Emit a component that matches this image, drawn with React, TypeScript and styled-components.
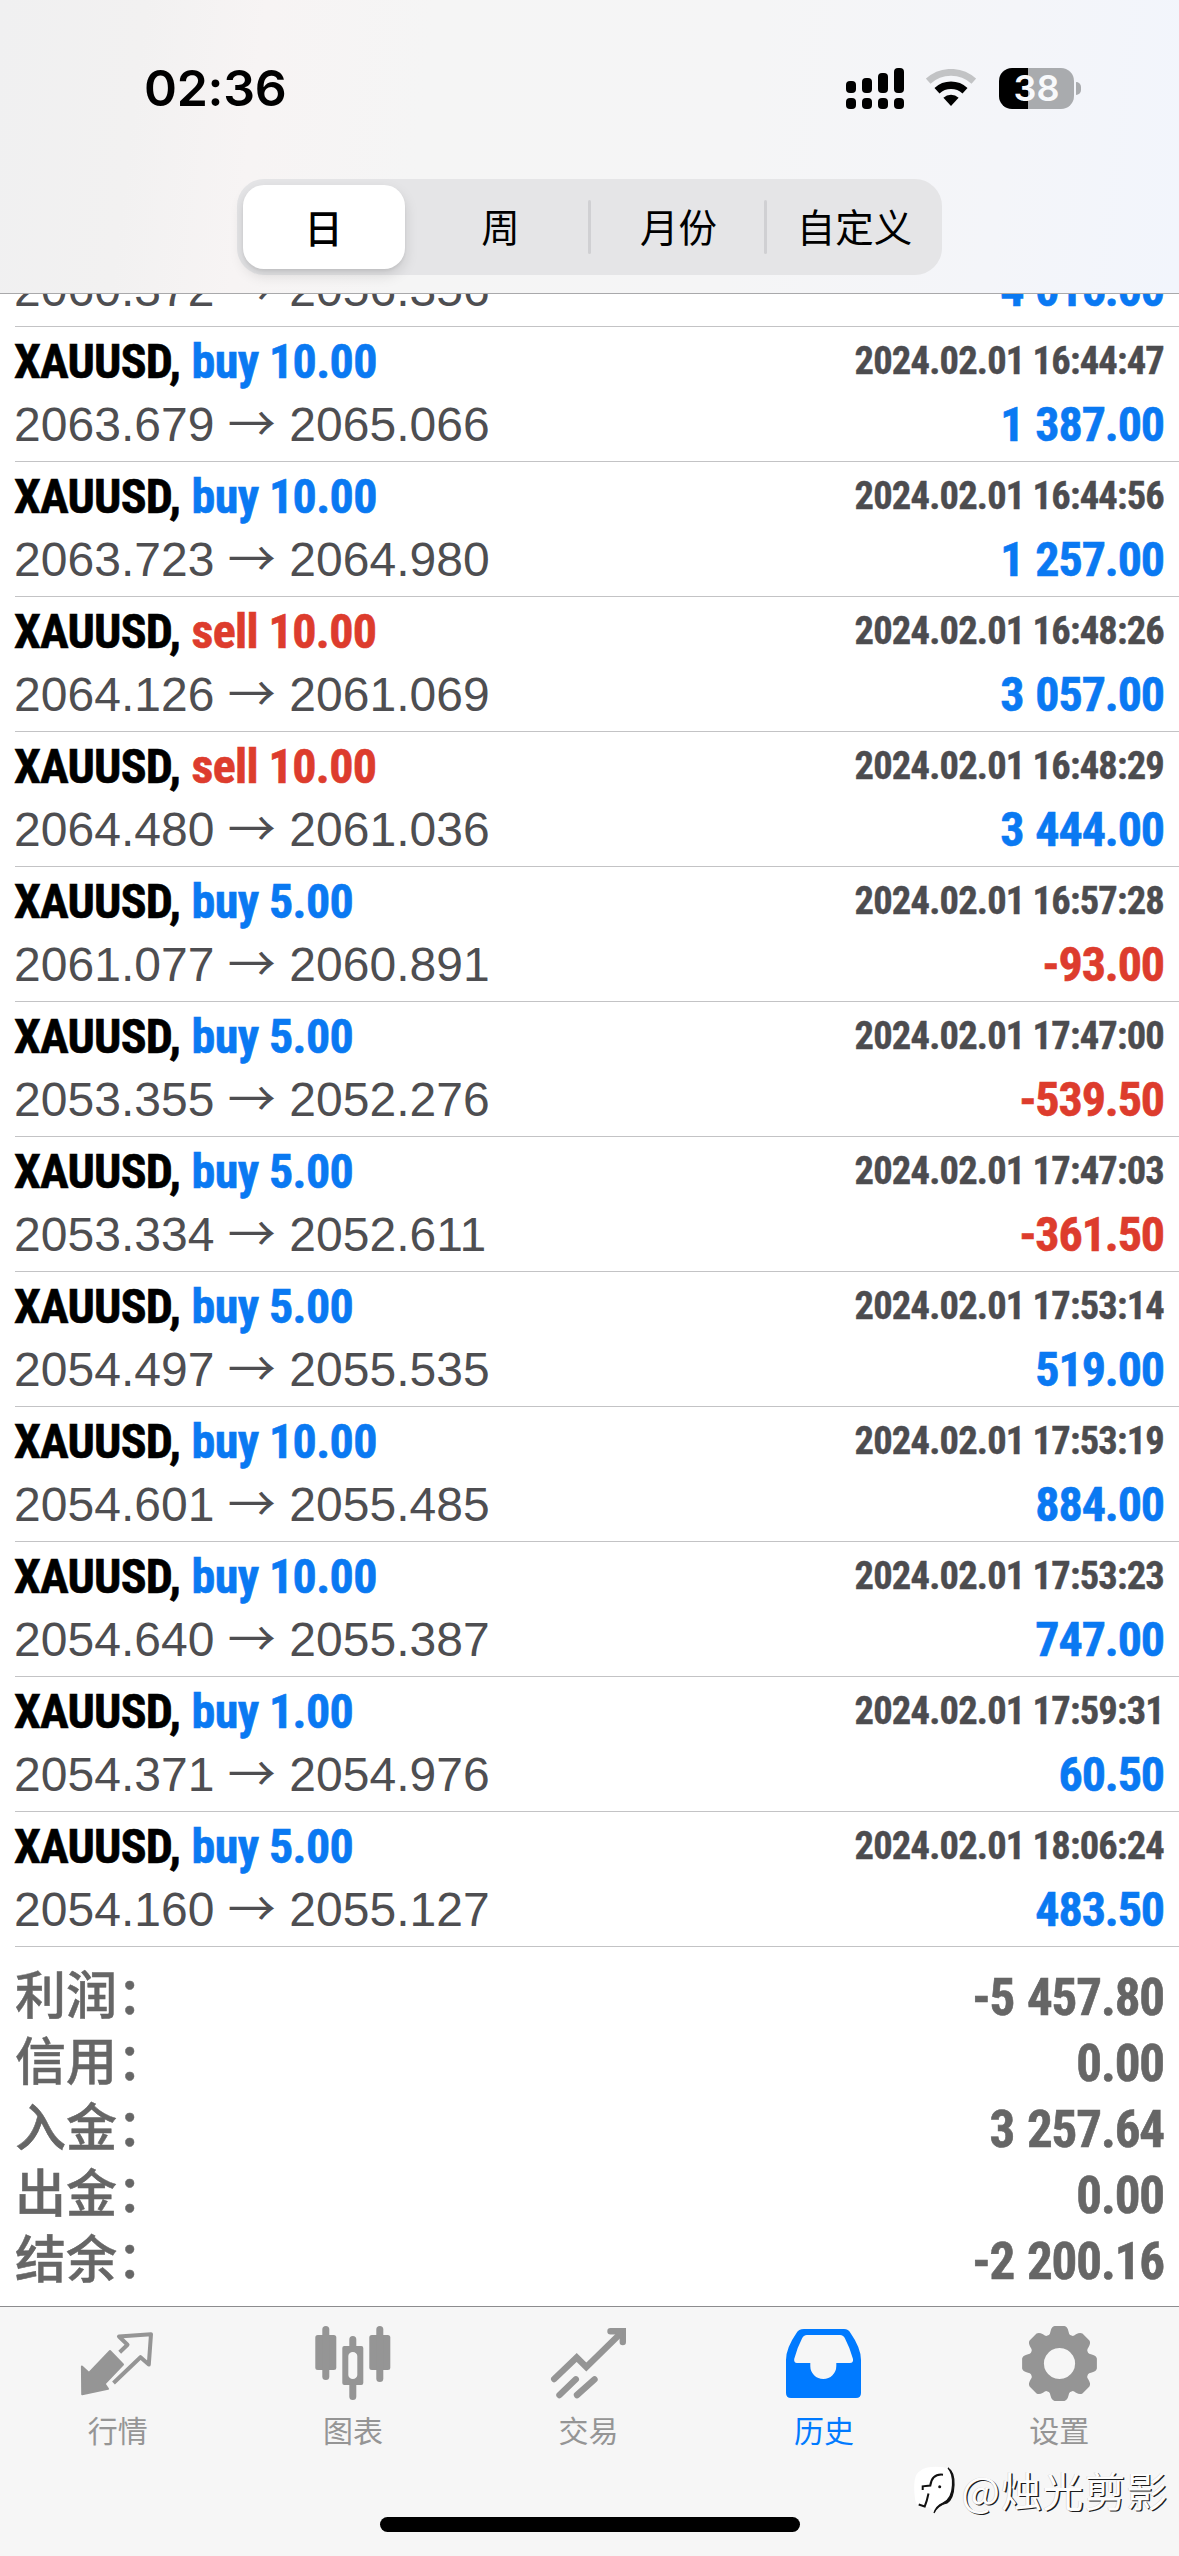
import React from "react";
import styled, { createGlobalStyle } from "styled-components";

const BLUE = "#0a79f2";
const RED = "#dd3c2d";
const CJK = '"Noto Sans CJK SC", sans-serif';
const CONDENSED = '"Roboto Condensed", Roboto, sans-serif';

const GlobalStyle = createGlobalStyle`
  * { box-sizing: border-box; }
  body { margin: 0; background: #fff; }
`;

const Screen = styled.div`
  position: relative;
  display: flex;
  flex-direction: column;
  width: 1179px;
  height: 2556px;
  overflow: hidden;
  background: #fff;
  font-family: ${CJK};
`;

const Header = styled.header`
  flex: none;
  display: flex;
  flex-direction: column;
  height: 294px;
  border-bottom: 1px solid #a9a9ab;
  background: linear-gradient(97deg, #f0f0f1 0%, #f2f1f1 12%, #f7f4f4 22%, #f5f5f5 36%, #f5f5f6 62%, #f4f5f9 84%, #f2f5fc 100%);
`;

const StatusBar = styled.div`
  flex: none;
  display: flex;
  align-items: center;
  justify-content: space-between;
  height: 179px;
  padding: 0 98px 3px 144px;
`;

const Clock = styled.div`
  font: 600 50px/60px Inter, sans-serif;
  letter-spacing: -0.3px;
  color: #000;
`;

const StatusIcons = styled.div`
  display: flex;
  align-items: center;
  gap: 22px;
`;

const Battery = styled.div`
  display: flex;
  align-items: center;
  gap: 2px;
  margin-left: 1px;
`;

const BatteryBody = styled.div`
  display: flex;
  align-items: center;
  justify-content: center;
  width: 75px;
  height: 41px;
  border-radius: 13px;
  background: linear-gradient(90deg, #000 38.7%, #a9abae 38.7%);
  color: #f8f9fb;
  font: 600 36px/41px Inter, sans-serif;
`;

const BatteryTip = styled.div`
  width: 5px;
  height: 13px;
  border-radius: 0 6px 6px 0;
  background: #a9abae;
`;

const Segments = styled.div`
  align-self: center;
  display: flex;
  width: 705px;
  height: 96px;
  margin-right: 1px;
  border-radius: 27px;
  background: #e5e5e7;
`;

const Segment = styled.button<{ $selected?: boolean; $divided?: boolean }>`
  position: relative;
  flex: none;
  width: 176px;
  display: flex;
  align-items: center;
  justify-content: center;
  border: 0;
  padding: 0 0 4px;
  color: #000;
  font: ${(p) => (p.$selected ? 500 : 400)} 38.5px/60px ${CJK};
  background: none;
  ${(p) =>
    p.$selected &&
    `width: 162px; height: 84px; margin: 6px 8px 6px 6px; padding-bottom: 3px; border-radius: 21px;
     background: #fff; box-shadow: 0 6px 14px rgba(0,0,0,.13), 0 2px 3px rgba(0,0,0,.06);`}
  ${(p) =>
    p.$divided &&
    `padding-left: 4px;
     &::before { content: ""; position: absolute; left: -1px; top: 21px; width: 3px; height: 54px; border-radius: 2px; background: #d0d0d3; }`}
`;

const History = styled.main`
  flex: 1;
  min-height: 0;
  overflow: hidden;
`;

const Deals = styled.ul`
  list-style: none;
  margin: -102px 0 0;
  padding: 0 0 0 15px;
`;

const Deal = styled.li`
  display: flex;
  flex-direction: column;
  gap: 3px;
  height: 135px;
  padding: 5px 15px 0 0;
  border-bottom: 1px solid #c3c3c5;
`;

const Line = styled.div`
  display: flex;
  justify-content: space-between;
  height: 60px;
  margin-left: -1px;
  white-space: pre;
`;

const Title = styled.span`
  font: 700 48px/60px ${CONDENSED};
  letter-spacing: -0.8px;
  color: #000;
  -webkit-text-stroke-width: 0.6px;
`;

const Side = styled.span<{ $tone: string }>`
  margin-left: 1px;
  letter-spacing: -0.6px;
  color: ${(p) => p.$tone};
`;

const Time = styled.time`
  font: 700 38.5px/57px ${CONDENSED};
  letter-spacing: -0.8px;
  color: #4c4c4f;
  -webkit-text-stroke-width: 0.4px;
`;

const Prices = styled.span`
  font: 400 48px/60px "Liberation Sans", Arial, sans-serif;
  letter-spacing: 0.03px;
  color: #4e4e51;
`;

const Arrow = styled.span`
  font: 400 48px/0 ${CJK};
`;

const Profit = styled.span<{ $tone: string }>`
  font: 700 48px/60px ${CONDENSED};
  letter-spacing: -1.1px;
  word-spacing: 2px;
  color: ${(p) => p.$tone};
  -webkit-text-stroke-width: 0.6px;
`;

const Totals = styled.dl`
  margin: 0;
  padding: 18px 15px 0;
`;

const Total = styled.div`
  display: flex;
  justify-content: space-between;
  height: 66px;
  color: #666;
`;

const TotalName = styled.dt`
  font: 500 51px/54px ${CJK};
  -webkit-text-stroke-width: 0.5px;
`;

const TotalValue = styled.dd`
  margin: 0;
  font: 700 51px/65px ${CONDENSED};
  letter-spacing: -1.1px;
  word-spacing: 2px;
  -webkit-text-stroke-width: 0.6px;
`;

const TabBar = styled.nav`
  flex: none;
  display: grid;
  grid-template-columns: repeat(5, 1fr);
  align-items: start;
  height: 211px;
  padding-right: 2px;
  border-top: 1px solid #8c8c8e;
  background: #f6f6f6;
`;

const Tab = styled.a<{ $active?: boolean }>`
  display: flex;
  flex-direction: column;
  align-items: center;
  gap: 6px;
  padding-top: 19px;
  color: ${(p) => (p.$active ? "#007aff" : "#959595")};
  font: 400 30px/44px ${CJK};
`;

const TabIcon = styled.svg`
  display: block;
  width: 75px;
  height: 75px;
  overflow: visible;
`;

const HomeArea = styled.footer`
  flex: none;
  display: flex;
  justify-content: center;
  height: 39px;
  background: #f6f6f6;
`;

const HomeIndicator = styled.div`
  width: 420px;
  height: 15px;
  border-radius: 8px;
  background: #000;
`;

const Watermark = styled.div`
  position: absolute;
  right: 11px;
  bottom: 42px;
  display: flex;
  align-items: center;
  height: 50px;
  color: #fdfdfd;
  font: 400 41px/50px ${CJK};
  letter-spacing: 0.8px;
  text-shadow: 1.4px 1.4px 0.5px #1c1c1c, -0.5px -0.5px 0.5px #ccc;
`;

const periods = ["日", "周", "月份", "自定义"];

type DealData = { side: "buy" | "sell"; volume: string; open: string; close: string; time: string; profit: string };

const deals: DealData[] = [
  ["sell", "10.00", "2060.372", "2056.356", "16:38:12", "4 016.00"],
  ["buy", "10.00", "2063.679", "2065.066", "16:44:47", "1 387.00"],
  ["buy", "10.00", "2063.723", "2064.980", "16:44:56", "1 257.00"],
  ["sell", "10.00", "2064.126", "2061.069", "16:48:26", "3 057.00"],
  ["sell", "10.00", "2064.480", "2061.036", "16:48:29", "3 444.00"],
  ["buy", "5.00", "2061.077", "2060.891", "16:57:28", "-93.00"],
  ["buy", "5.00", "2053.355", "2052.276", "17:47:00", "-539.50"],
  ["buy", "5.00", "2053.334", "2052.611", "17:47:03", "-361.50"],
  ["buy", "5.00", "2054.497", "2055.535", "17:53:14", "519.00"],
  ["buy", "10.00", "2054.601", "2055.485", "17:53:19", "884.00"],
  ["buy", "10.00", "2054.640", "2055.387", "17:53:23", "747.00"],
  ["buy", "1.00", "2054.371", "2054.976", "17:59:31", "60.50"],
  ["buy", "5.00", "2054.160", "2055.127", "18:06:24", "483.50"],
].map(([side, volume, open, close, time, profit]) => ({ side, volume, open, close, time, profit }) as DealData);

const totals = [
  ["利润：", "-5 457.80"],
  ["信用：", "0.00"],
  ["入金：", "3 257.64"],
  ["出金：", "0.00"],
  ["结余：", "-2 200.16"],
];

const SignalIcon = () => (
  <svg width="58" height="41" viewBox="0 0 58 41">
    {[13, 10, 5, 0].map((top, i) => (
      <g key={i}>
        <rect x={i * 16} y={top} width="10" height={25 - top} rx="4" />
        <rect x={i * 16} y="30" width="10" height="11" rx="4" />
      </g>
    ))}
  </svg>
);

const WifiIcon = () => (
  <svg width="50" height="38" viewBox="0 0 50 38" fill="none">
    <path d="M2.2 12.2A33.7 33.7 0 0 1 47.8 12.2" stroke="#c2c3c5" strokeWidth="6.8" />
    <path d="M11 21.7A20.7 20.7 0 0 1 39 21.7" stroke="#000" strokeWidth="7.4" />
    <path d="M25 37L17.4 28.7A11.3 11.3 0 0 1 32.6 28.7Z" fill="#000" />
  </svg>
);

const QuotesIcon = () => (
  <TabIcon viewBox="0 0 75 75">
    <path
      d="M1.9 40.5L9 47L30 25L43 38.5L24.6 57.8L28 62.8L2.2 68.2Z"
      fill="currentColor"
      stroke="currentColor"
      strokeWidth="2"
      strokeLinejoin="round"
    />
    <path
      d="M39.7 26.3L47.5 18.7L39 10.5L71 8.2L68.8 38.5L60.5 31.2L33.5 57"
      fill="none"
      stroke="currentColor"
      strokeWidth="4"
      strokeLinejoin="round"
    />
  </TabIcon>
);

const ChartIcon = () => (
  <TabIcon viewBox="0.7 0 75 75" fill="currentColor">
    <rect x="0" y="9" width="21" height="35" rx="2.5" />
    <rect x="7" y="0" width="7" height="54" rx="3.5" />
    <path fillRule="evenodd" d="M29 20h17a2 2 0 0 1 2 2v35a2 2 0 0 1-2 2h-17a2 2 0 0 1-2-2v-35a2 2 0 0 1 2-2zM37.500 26a4.500 4 0 0 0-4.500 4v19a4.500 4 0 0 0 9 0v-19a4.500 4 0 0 0-4.500-4z" />
    <path d="M34 21v-7.500a3.500 3.500 0 0 1 7 0v7.500zM34 58v12.500a3.500 3.500 0 0 0 7 0v-12.500z" />
    <rect x="54" y="9" width="21" height="35" rx="2.5" />
    <rect x="61" y="0" width="7" height="56" rx="3.5" />
  </TabIcon>
);

const TradeIcon = () => (
  <TabIcon viewBox="0 0 75 75" fill="none" stroke="currentColor" strokeWidth="6.4" strokeLinecap="round">
    <path d="M3.200 53L25.700 31.500L35.300 41L69 8" />
    <path d="M59.500 5.200H71.800V16" />
    <path d="M63 5.200H71.800V14Z" fill="currentColor" strokeWidth="1" />
    <path d="M8.500 69L24.800 53.300M26 69L43.500 53.300" />
  </TabIcon>
);

const HistoryIcon = () => (
  <TabIcon viewBox="0 0 75 75" fill="currentColor">
    <path
      fillRule="evenodd"
      d="M18 3H58Q62.500 3 64.500 7Q75 22 75 34V67Q75 72 70 72H5Q0 72 0 67V34Q0 22 10.500 7Q12.500 3 18 3ZM21 9Q17.500 9 16 12.500Q11 22 8.200 33Q7.800 37 11 37H24.300V40A13 13 0 0 0 50.300 40V37H64Q67.500 37 67 33Q64 22 59 12.500Q57.500 9 54 9Z"
    />
  </TabIcon>
);

const polar = (radius: number, degrees: number) => {
  const a = (degrees * Math.PI) / 180;
  return `${(37.5 + radius * Math.sin(a)).toFixed(2)} ${(37.5 - radius * Math.cos(a)).toFixed(2)}`;
};

const gearOutline =
  Array.from({ length: 8 }, (_, i) => {
    const t = i * 45;
    return [
      `${i === 0 ? "M" : "L"}${polar(30.5, t - 20.5)}`,
      `Q${polar(30.5, t - 18)} ${polar(33.5, t - 15.5)}`,
      `Q${polar(37.6, t - 12)} ${polar(37.7, t - 7.5)}`,
      `L${polar(37.7, t + 7.5)}`,
      `Q${polar(37.6, t + 12)} ${polar(33.5, t + 15.5)}`,
      `Q${polar(30.5, t + 18)} ${polar(30.5, t + 20.5)}`,
    ].join("");
  }).join("") + "Z";

const SettingsIcon = () => (
  <TabIcon viewBox="0 0 75 75" fill="currentColor">
    <path fillRule="evenodd" d={`${gearOutline}M37.500 21.900a15.600 15.600 0 1 0 .01 0Z`} />
  </TabIcon>
);

const WatermarkLogo = () => (
  <svg width="51" height="52" viewBox="0 0 51 52" fill="none">
    <path d="M10 8Q16 3 30 4Q44 4 44 20Q45 38 34 41Q26 43 24 49L19 44Q6 46 5 36Q2 12 10 8Z" fill="#fff" />
    <path d="M38 5Q44.500 9 44 22Q43.500 36 37 40Q28 42 24 50Q26 43 33 40Q42 36 42.500 22Q43 10 38 5Z" fill="#111" stroke="#111" strokeWidth="1.200" />
    <path d="M33 11.700Q22 10.500 20.300 22.500L12.700 23.300V27M18.500 30.500Q17 38 14.700 43.500L8.700 41.500" stroke="#111" strokeWidth="2" />
    <circle cx="29.700" cy="23.700" r="1.500" fill="#111" />
  </svg>
);

const tabs = [
  { label: "行情", Icon: QuotesIcon },
  { label: "图表", Icon: ChartIcon },
  { label: "交易", Icon: TradeIcon },
  { label: "历史", Icon: HistoryIcon, active: true },
  { label: "设置", Icon: SettingsIcon },
];

export default function App() {
  return (
    <Screen>
      <GlobalStyle />
      <Header>
        <StatusBar>
          <Clock>02:36</Clock>
          <StatusIcons>
            <SignalIcon />
            <WifiIcon />
            <Battery>
              <BatteryBody>38</BatteryBody>
              <BatteryTip />
            </Battery>
          </StatusIcons>
        </StatusBar>
        <Segments>
          {periods.map((name, i) => (
            <Segment key={name} $selected={i === 0} $divided={i > 1}>
              {name}
            </Segment>
          ))}
        </Segments>
      </Header>
      <History>
        <Deals>
          {deals.map((d) => (
            <Deal key={d.time}>
              <Line>
                <Title>
                  XAUUSD, <Side $tone={d.side === "buy" ? BLUE : RED}>{`${d.side} ${d.volume}`}</Side>
                </Title>
                <Time>{`2024.02.01 ${d.time}`}</Time>
              </Line>
              <Line>
                <Prices>
                  {d.open} <Arrow>→</Arrow> {d.close}
                </Prices>
                <Profit $tone={d.profit.startsWith("-") ? RED : BLUE}>{d.profit}</Profit>
              </Line>
            </Deal>
          ))}
        </Deals>
        <Totals>
          {totals.map(([name, value]) => (
            <Total key={name}>
              <TotalName>{name}</TotalName>
              <TotalValue>{value}</TotalValue>
            </Total>
          ))}
        </Totals>
      </History>
      <TabBar>
        {tabs.map(({ label, Icon, active }) => (
          <Tab key={label} $active={active}>
            <Icon />
            {label}
          </Tab>
        ))}
      </TabBar>
      <HomeArea>
        <HomeIndicator />
      </HomeArea>
      <Watermark>
        <WatermarkLogo />
        @烛光剪影
      </Watermark>
    </Screen>
  );
}
